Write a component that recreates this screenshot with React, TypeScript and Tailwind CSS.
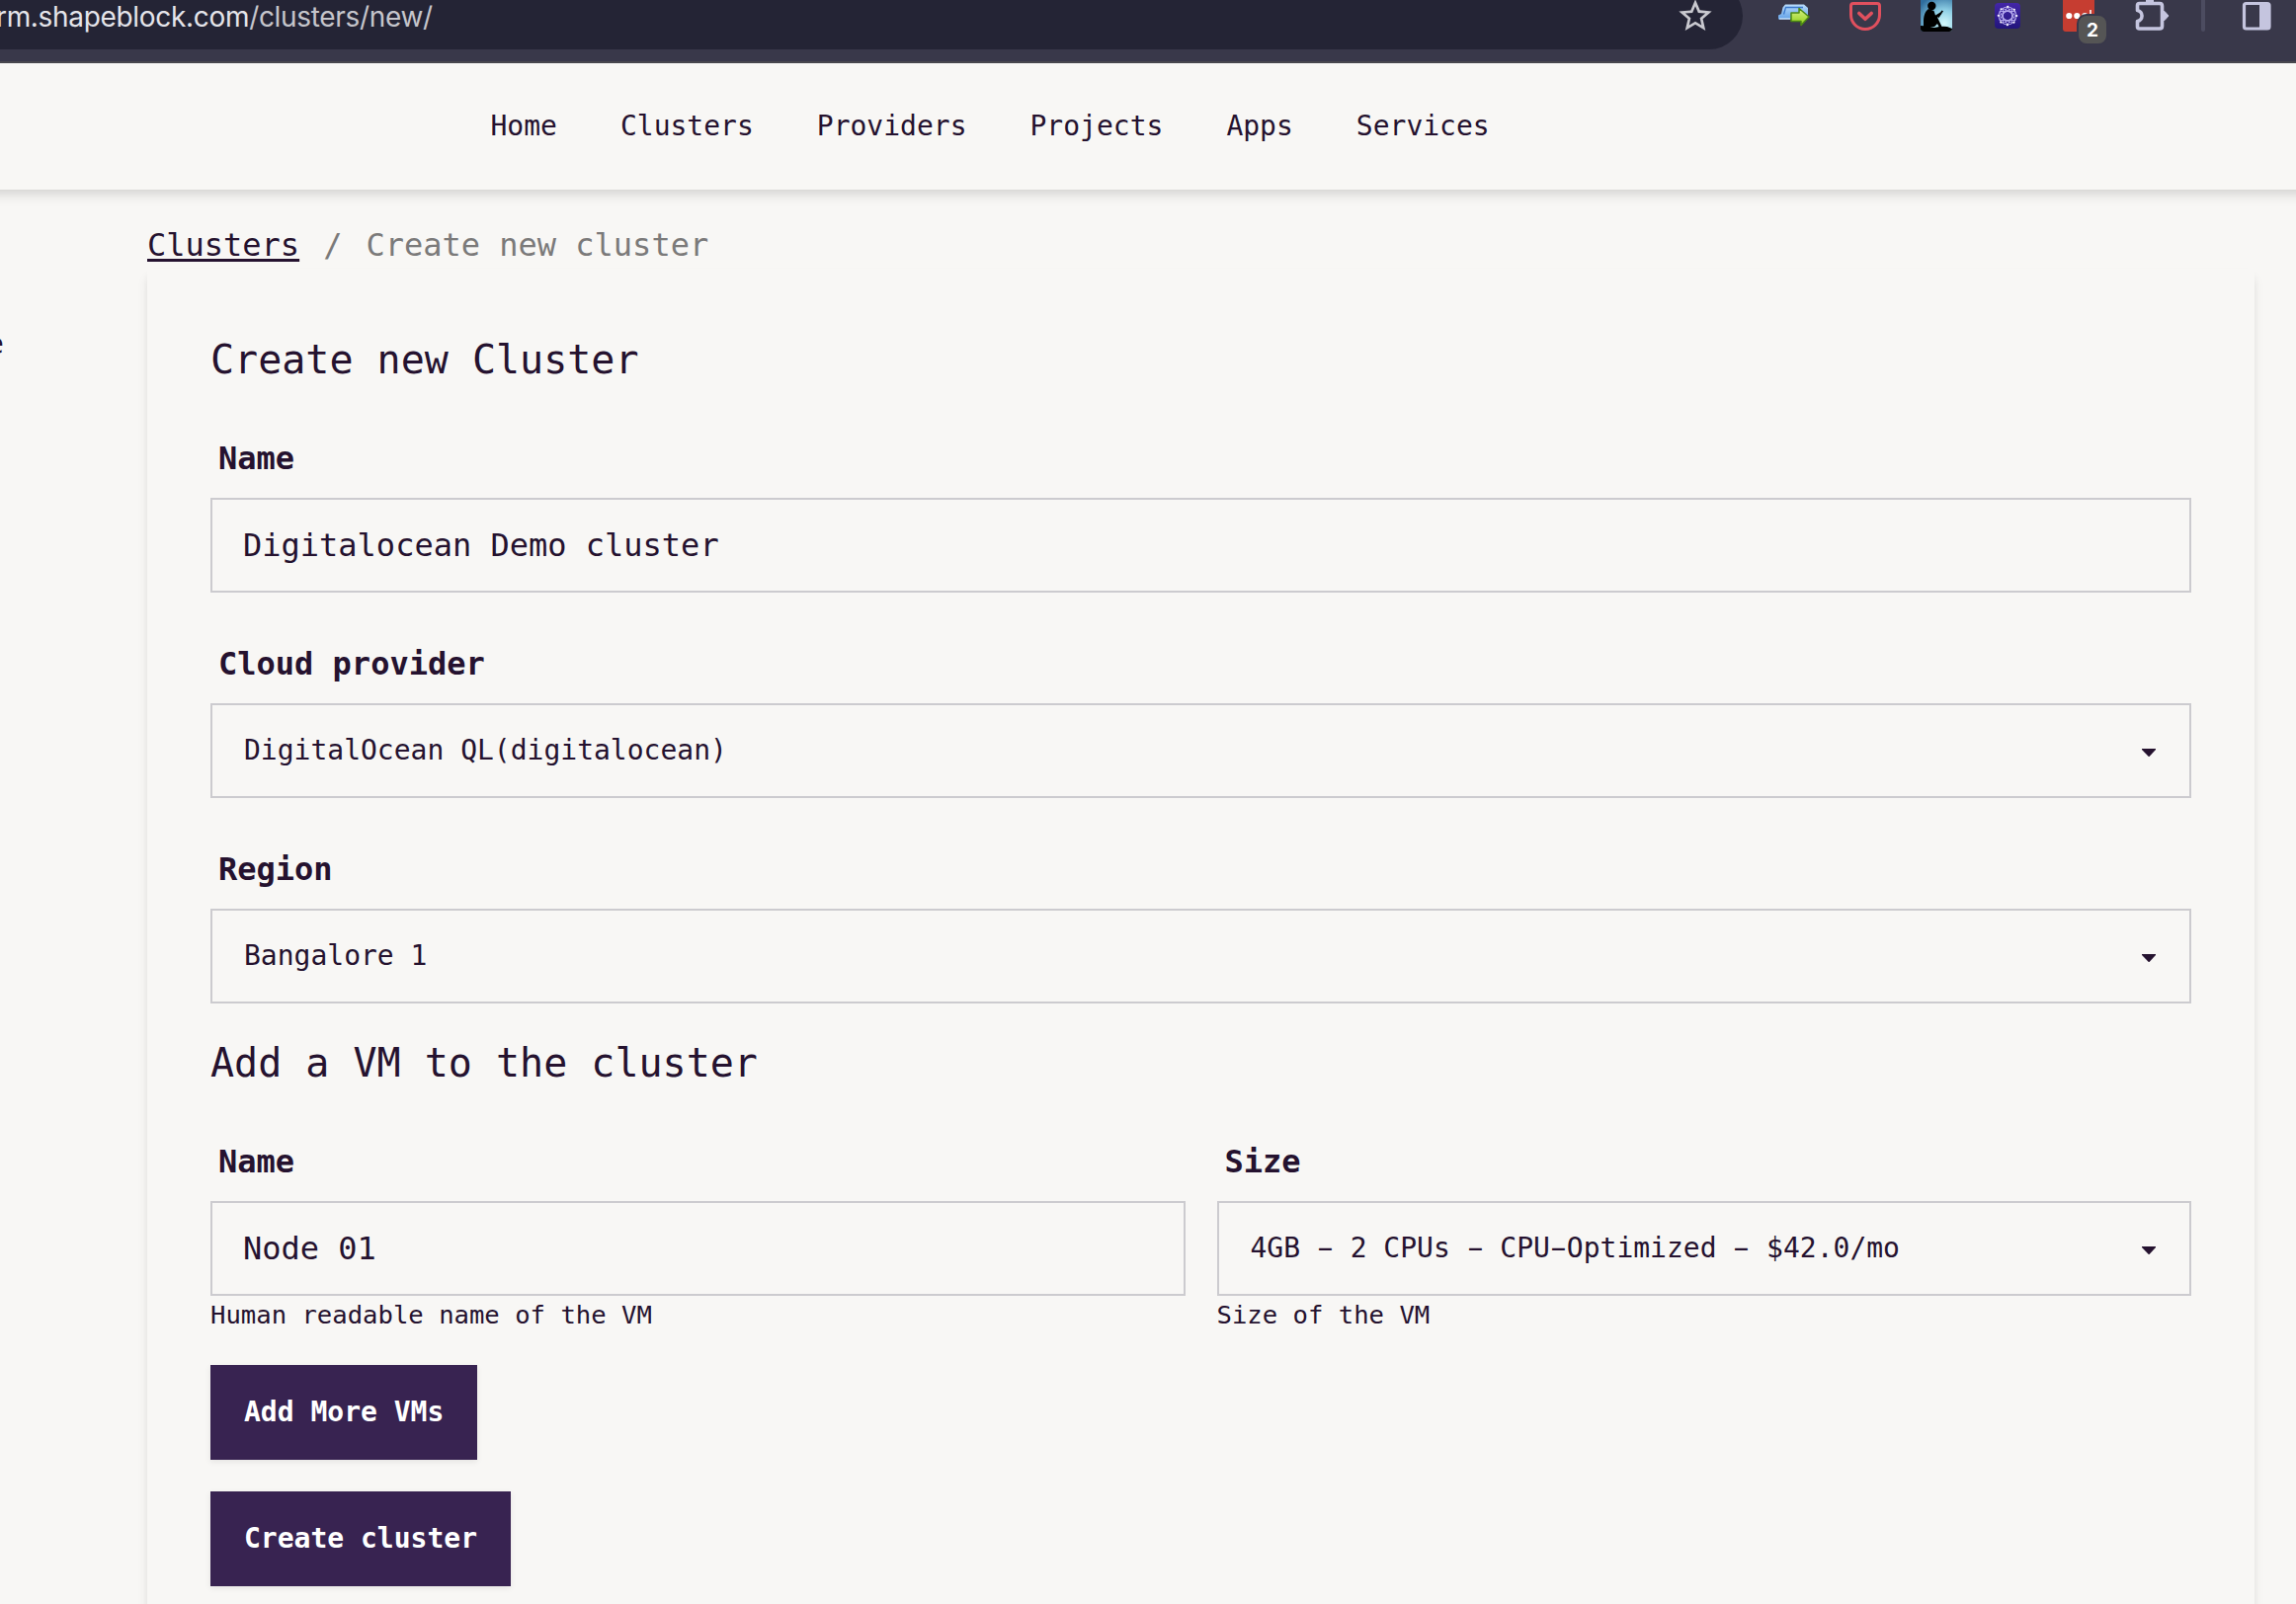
import React from "react";
import { MdStarBorder } from "react-icons/md";

const navItems = ["Home", "Clusters", "Providers", "Projects", "Apps", "Services"];

function ForwardIcon() {
  return (
    <svg viewBox="0 0 32 32" className="h-8 w-8 shrink-0">
      <defs>
        <linearGradient id="fwd-blue" x1="0" y1="0" x2="0" y2="1">
          <stop offset="0" stopColor="#b9dcfb" />
          <stop offset="1" stopColor="#5f9fe6" />
        </linearGradient>
        <linearGradient id="fwd-green" x1="0" y1="0" x2="0" y2="1">
          <stop offset="0" stopColor="#d8f08a" />
          <stop offset="1" stopColor="#8fd014" />
        </linearGradient>
      </defs>
      <path d="M0 20V15.500L3 14L4.500 7.500L7 4.500H26L30 8V15L28 19.500H0Z" fill="url(#fwd-blue)" />
      <path d="M5.500 14.500L7.500 7.500H25" fill="none" stroke="#3b78cc" strokeWidth="1.300" />
      <path d="M1 19H12" stroke="#dcefff" strokeWidth="1.200" />
      <path
        d="M13 13H21V8.500L31 17L23 25.500V21.500H13Z"
        fill="url(#fwd-green)"
        stroke="#4c8a13"
        strokeWidth="1.500"
        strokeLinejoin="round"
      />
    </svg>
  );
}

function PocketIcon() {
  return (
    <svg viewBox="0 0 32 32" className="h-8 w-8 shrink-0" fill="none" stroke="#e0505e" strokeLinecap="round" strokeLinejoin="round">
      <path d="M4 3.500H28Q30.500 3.500 30.500 6V15A14.500 14.500 0 0 1 1.500 15V6Q1.500 3.500 4 3.500Z" strokeWidth="3" />
      <path d="M9.800 13.500L16 19.300L22.200 13.500" strokeWidth="3.600" />
    </svg>
  );
}

function ReaderIcon() {
  return (
    <svg viewBox="0 0 32 32" className="h-8 w-8 shrink-0 rounded-b-[3px]">
      <defs>
        <radialGradient id="reader-sky" cx="0.75" cy="0.75" r="0.95">
          <stop offset="0" stopColor="#d3f7fb" />
          <stop offset="0.45" stopColor="#8fd0e6" />
          <stop offset="1" stopColor="#2f6d9e" />
        </radialGradient>
      </defs>
      <rect width="32" height="32" fill="url(#reader-sky)" />
      <circle cx="11.300" cy="6" r="4.200" fill="#000" />
      <path d="M8 9C4 12 3 17 3 22V27H14L17 24L19 28H22L17 17.500L21 14L20 12.500L15 15.500L13.500 11Z" fill="#000" />
      <path d="M17 17L21.500 10.500L23 11.300L18.500 18Z" fill="#000" />
      <path d="M0 26Q8 26 14 28Q22 26 27 27L32 29V32H0Z" fill="#000" />
    </svg>
  );
}

function NetworkIcon() {
  return (
    <svg viewBox="0 0 32 32" className="h-8 w-8 shrink-0">
      <defs>
        <linearGradient id="net-bg" x1="0" y1="0" x2="0" y2="1">
          <stop offset="0" stopColor="#4326a8" />
          <stop offset="1" stopColor="#22157c" />
        </linearGradient>
      </defs>
      <rect x="3" y="3" width="26" height="26" rx="4" fill="url(#net-bg)" />
      <g fill="none" stroke="#b9aef0" strokeWidth="0.9">
        <circle cx="16" cy="16" r="9" />
        <path d="M16 7L24 20.500H8ZM16 25L8 11.500H24ZM7 16L20.500 8.500V23.500ZM25 16L11.500 8.500V23.500Z" />
      </g>
      <circle cx="16" cy="16" r="9.300" fill="none" stroke="#fff" strokeWidth="2" strokeLinecap="round" strokeDasharray="0.1 7.200" />
    </svg>
  );
}

function PasswordIcon() {
  return (
    <div className="relative h-8 w-8 shrink-0">
      <svg viewBox="0 0 32 32" className="h-8 w-8">
        <path d="M0 0H32V32H3Q0 32 0 29Z" fill="#c63d31" />
        <circle cx="6.300" cy="16" r="3.100" fill="#fff" />
        <circle cx="14.300" cy="16" r="3.100" fill="#fff" />
        <circle cx="22.300" cy="16" r="3.100" fill="#fff" />
        <path d="M28 10V20" stroke="#fff" strokeWidth="1.600" />
      </svg>
      <span className="absolute left-[14px] top-[14px] flex h-8 w-8 items-center justify-center rounded-[10px] border-2 border-[#39384a] bg-[#555555] font-['Inter'] text-[19px] font-bold leading-none text-white">
        2
      </span>
    </div>
  );
}

function PuzzleIcon() {
  return (
    <svg viewBox="0 0 36 32" className="-mr-1 h-8 w-9 shrink-0">
      <path d="M12 2.500V0H20V2.500Z" fill="#c5c5df" />
      <path d="M29 11.500H31L35 16L31 20.500H29Z" fill="#c5c5df" stroke="#c5c5df" strokeLinejoin="round" />
      <path
        d="M5.500 3.500H26Q28.500 3.500 28.500 6V26.500Q28.500 29 26 29H5.500Q3.500 29 3.500 27V21.500A5.600 5.600 0 0 0 3.500 10.500V5.500Q3.500 3.500 5.500 3.500Z"
        fill="none"
        stroke="#c5c5df"
        strokeWidth="3.600"
        strokeLinejoin="round"
      />
    </svg>
  );
}

function SidePanelIcon() {
  return (
    <svg viewBox="0 0 32 32" className="h-8 w-8 shrink-0">
      <rect x="3.500" y="3.500" width="25.500" height="25.500" rx="2" fill="none" stroke="#c5c5df" strokeWidth="3.200" />
      <rect x="19" y="3" width="10" height="26" fill="#c5c5df" />
    </svg>
  );
}

function BrowserBar() {
  return (
    <div className="flex h-16 shrink-0 items-start overflow-hidden border-b-2 border-[#48484e] bg-[#39384a]">
      <div className="-mt-[18px] flex h-[68px] w-[1764px] shrink-0 items-center rounded-r-full bg-[#242435] pr-7">
        <div className="-ml-[4px] flex-1 whitespace-pre pt-px font-['Inter'] text-[28px] leading-[36px] tracking-[-0.32px] text-[#c5c5cb]">
          <span className="text-[#e4e4ea]">rm.shapeblock.com</span>/clusters/new/
        </div>
        <MdStarBorder className="h-10 w-10 text-[#c9c9cf]" />
      </div>
      <div className="ml-9 flex gap-10">
        <ForwardIcon />
        <PocketIcon />
        <ReaderIcon />
        <NetworkIcon />
        <PasswordIcon />
        <PuzzleIcon />
      </div>
      <div className="mx-9 h-8 w-1 rounded-b-full bg-[#4c4c60]" />
      <SidePanelIcon />
    </div>
  );
}

function Label({ children }: { children: React.ReactNode }) {
  return <label className="mb-4 mt-12 block pl-2 text-[32px] font-bold leading-[48px]">{children}</label>;
}

function TextField({ label, value }: { label: string; value: string }) {
  return (
    <div>
      <Label>{label}</Label>
      <input
        defaultValue={value}
        className="block h-24 w-full border-2 border-[#cccbcf] bg-transparent px-[31px] text-[32px] outline-none"
      />
    </div>
  );
}

function SelectField({ label, value }: { label: string; value: string }) {
  return (
    <div>
      <Label>{label}</Label>
      <div className="flex h-24 items-center justify-between border-2 border-[#cccbcf] pl-[32px] pr-[34px] text-[28px]">
        <span className="whitespace-pre">
          {value.split(/(-)/).map((part, i) =>
            part === "-" ? (
              <span key={i} className="inline-block scale-x-[1.8]">
                -
              </span>
            ) : (
              part
            ),
          )}
        </span>
        <svg viewBox="0 0 14 8" className="mt-1 h-2 w-[14px]">
          <path d="M0 0H14V1L7.500 8H6.800L0 1Z" fill="#25122f" />
        </svg>
      </div>
    </div>
  );
}

function ActionButton({ children }: { children: React.ReactNode }) {
  return (
    <button className="mt-8 block h-24 bg-[#382351] px-[34px] text-[28px] font-bold text-white shadow-[0_2px_6px_rgba(0,0,0,0.08)]">
      {children}
    </button>
  );
}

export default function App() {
  return (
    <div className="flex h-[1624px] w-[2324px] flex-col overflow-hidden bg-[#f8f7f5] font-['DejaVu_Sans_Mono',monospace] text-[#25122f]">
      <BrowserBar />
      <nav className="relative -mx-8 flex h-32 shrink-0 items-center gap-16 bg-[#f8f7f5] pl-[528.5px] text-[28px] shadow-[0_8px_12px_-2px_rgba(0,0,0,0.1),0_4px_8px_-2px_rgba(0,0,0,0.06)]">
        {navItems.map((item) => (
          <a key={item}>{item}</a>
        ))}
      </nav>
      <div className="flex min-h-0 flex-1">
        <aside className="w-[149px] shrink-0 pt-[133px] text-[28px] leading-[48px]">
          <div className="-ml-[13px]">e</div>
        </aside>
        <main className="w-[2133px] pt-8">
          <div className="flex h-12 items-center whitespace-pre text-[32px] leading-[48px] text-[#7b7a7a]">
            <a className="text-[#25122f] underline decoration-[3px] underline-offset-[3px]">Clusters</a>
            <span className="px-6">/</span>
            <span>Create new cluster</span>
          </div>
          <section className="h-[1500px] bg-[#f8f7f5] px-16 pt-16 shadow-[0_8px_12px_-2px_rgba(0,0,0,0.1),0_4px_8px_-2px_rgba(0,0,0,0.06)]">
            <h1 className="text-[40px] leading-[56px]">Create new Cluster</h1>
            <TextField label="Name" value="Digitalocean Demo cluster" />
            <SelectField label="Cloud provider" value="DigitalOcean QL(digitalocean)" />
            <SelectField label="Region" value="Bangalore 1" />
            <h2 className="mt-8 text-[40px] leading-[56px]">Add a VM to the cluster</h2>
            <div className="grid grid-cols-2 gap-8">
              <div>
                <TextField label="Name" value="Node 01" />
                <p className="text-[25.6px] leading-[38px]">Human readable name of the VM</p>
              </div>
              <div>
                <SelectField label="Size" value="4GB - 2 CPUs - CPU-Optimized - $42.0/mo" />
                <p className="text-[25.6px] leading-[38px]">Size of the VM</p>
              </div>
            </div>
            <ActionButton>Add More VMs</ActionButton>
            <ActionButton>Create cluster</ActionButton>
          </section>
        </main>
      </div>
    </div>
  );
}
